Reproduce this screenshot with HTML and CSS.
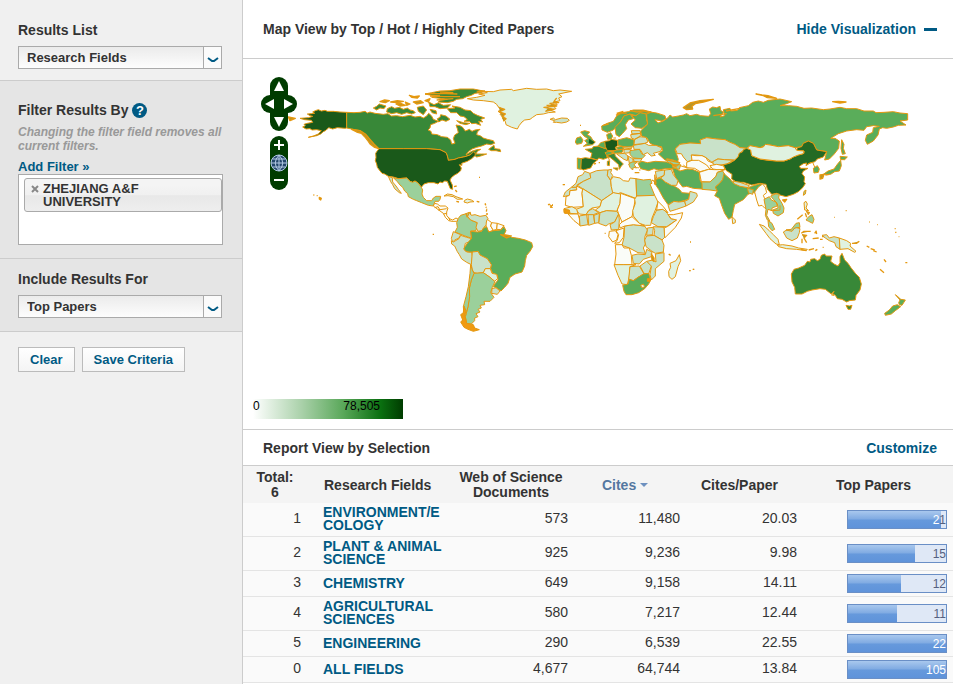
FILE: index.html
```html
<!DOCTYPE html>
<html lang="en">
<head>
<meta charset="utf-8">
<title>Research Fields</title>
<link rel="stylesheet" href="styles.css">
</head>
<body>
<div class="page">
  <aside class="sidebar">
    <section class="block block-list">
      <label class="heading" for="results-list">Results List</label>
      <div class="picker">
        <select id="results-list"><option>Research Fields</option></select>
        <span class="picker-arrow"><svg width="12" height="6" viewBox="0 0 12 6"><path d="M1 1L5 4H7L11 1" /></svg></span>
      </div>
    </section>
    <section class="block block-filter shaded">
      <h2 class="heading">Filter Results By <a class="help" href="#">?</a></h2>
      <p class="hint">Changing the filter field removes all current filters.</p>
      <a class="add" href="#">Add Filter »</a>
      <div class="chips">
        <div class="chip"><button class="chip-x" aria-label="Remove"><svg width="8" height="8" viewBox="0 0 8 8"><path d="M1 1L7 7M7 1L1 7"/></svg></button><span>ZHEJIANG A&amp;F UNIVERSITY</span></div>
      </div>
    </section>
    <section class="block block-include shaded">
      <label class="heading" for="include">Include Results For</label>
      <div class="picker">
        <select id="include"><option>Top Papers</option></select>
        <span class="picker-arrow"><svg width="12" height="6" viewBox="0 0 12 6"><path d="M1 1L5 4H7L11 1" /></svg></span>
      </div>
    </section>
    <div class="block actions">
      <button class="btn">Clear</button>
      <button class="btn">Save Criteria</button>
    </div>
  </aside>

  <main class="main">
    <header class="bar bar-map">
      <h1 class="bar-title">Map View by Top / Hot / Highly Cited Papers</h1>
      <a class="bar-link" href="#">Hide Visualization <span class="dash"></span></a>
    </header>
    <section class="map">
      <svg class="world" viewBox="729 177 2130 990" role="img" aria-label="World map">
        <!-- Alaska and Hawaii -->
        <g transform="translate(750 195)">
          <path class="c7" d="M290 142L270 141 250 139 232 139 225 136 214 138 205 134 196 137 188 141 194 145 184 146 172 147 180 152 188 154 176 158 150 160 164 164 184 166 188 172 172 175 162 178 166 182 158 186 168 192 180 191 186 195 200 194 214 197 205 207 190 213 175 217 200 212 212 207 220 200 228 196 236 188 248 192 262 188 285 190 290 189Z"/>
          <path class="o" d="M115 156L136 160 120 167Z"/><path class="o" d="M190 390h3M200 392h3M208 397l6 3-2 5-4-3z"/>
        </g>
        <!-- North America -->
        <g transform="translate(1080 240)">
          <path class="c5" d="M-40 97L-18 98 0 97 15 94 22 99 30 96 45 100 70 103 84 101 94 108 110 107 128 110 150 106 165 111 180 109 190 114 200 108 206 100 215 108 220 118 235 124 224 130 212 134 210 144 204 150 213 154 215 162 232 164 245 170 262 172 272 180 275 192 285 190 280 176 284 165 295 158 292 146 288 135 300 137 308 142 316 153 328 148 336 154 345 150 360 148 352 156 350 164 362 168 370 174 382 178 400 182 404 190 392 194 380 192 365 198 350 202 336 207 325 215 318 224 335 214 350 209 362 208 352 214 348 222 365 222 380 222 362 228 350 231 342 225 330 225 315 230 295 234 285 238 265 241 262 228 258 218 240 209 200 206 130 206 57 206 45 195 36 188 28 177 22 168 15 162 0 152 -25 147 -40 144Z"/>
          <path class="o" d="M-25 148L-10 156 4 160 14 170 22 180 30 192 44 202 56 206 42 192 30 178 16 162 0 152Z"/>
          <path class="c7" d="M57 206L130 206 200 206 240 209 258 218 262 228 265 241 285 238 295 234 315 230 330 225 340 216 345 217 346 226 335 236 322 244 305 250 306 256 298 254 304 264 302 272 293 280 284 285 275 292 270 300 277 315 278 328 271 326 266 314 262 304 254 303 247 308 240 306 234 312 222 308 205 308 192 312 184 322 175 310 165 303 158 307 150 304 140 294 115 296 100 291 85 289 74 282 66 280 58 270 52 262 50 252 46 242 48 232 47 220 50 215Z"/>
          <path class="c3" d="M100 293L115 296 140 294 150 304 158 307 165 303 175 310 184 322 188 330 186 342 190 352 200 362 215 362 220 354 228 349 242 349 240 358 236 364 225 364 220 378 205 376 185 368 170 362 160 358 145 350 143 341 134 333 128 322 120 315 112 305Z"/>
          <path class="c2" d="M85 289L97 293 98 306 108 318 115 328 124 340 118 338 104 326 98 314 92 305Z"/>
          <!-- Arctic islands -->
          <path class="c5" d="M195 42L215 38 240 33 270 32 300 27 340 27 375 34 362 38 345 40 334 46 320 50 308 56 290 58 280 64 262 68 235 66 240 61 262 58 240 55 215 52 240 46 214 46Z"/>
          <path class="o" d="M195 42L240 40 292 42M210 48L252 50 300 50M240 36L280 38M230 60L280 56M375 33L350 36"/>
          <path class="c5" d="M82 86L95 80 104 85 118 82 130 88 142 84 150 90 160 92 166 98 155 102 140 98 125 103 110 98 95 101 80 96Z"/>
          <path class="c5" d="M40 84L50 79 58 72 78 78 72 86 60 84 50 90Z"/>
          <path class="o" d="M60 65L74 60 88 62 76 68ZM108 72L122 70 136 76 120 78ZM148 46L162 50 178 48 172 54 155 52ZM160 66L182 62 190 68 170 72ZM92 66L112 62 130 64 112 68ZM136 66L150 72 140 76ZM195 62L210 56 205 66Z"/>
          <path class="c5" d="M172 82L190 78 200 90 190 104 175 94ZM206 66L222 74 235 68 250 76 272 74 262 84 240 86 225 80 210 80Z"/>
          <path class="c5" d="M262 86L285 84 276 78 300 82 315 90 332 92 340 100 352 106 374 114 362 118 368 126 356 124 362 136 346 130 335 131 328 124 312 124 322 118 312 110 300 108 290 98 272 98Z"/>
          <path class="c5" d="M242 104L258 108 270 118 258 124 246 120 236 126 232 116 240 112ZM290 122L310 128 330 130 318 134 300 130ZM210 88L228 92 230 102 216 98Z"/>
          <path class="c5" d="M386 208L396 200 402 196 404 206 420 208 422 215 408 212 394 212Z"/>
          <!-- Greenland and Iceland -->
          <path class="c1" d="M322 56L350 52 375 46 356 42 382 38 365 34 400 35 420 30 455 28 460 32 500 25 530 28 560 27 580 32 600 30 635 34 615 38 596 42 606 50 596 54 600 62 584 66 592 74 560 76 582 80 588 86 570 90 586 96 565 98 550 102 530 104 518 112 510 118 494 120 486 126 478 136 472 147 455 142 438 134 436 124 428 116 432 108 420 104 424 98 414 94 428 88 414 80 410 73 400 66 370 62 340 60Z"/>
          <path class="o" d="M416 82L434 88 418 96 436 102 426 110 438 116 430 124M590 54L582 64 596 68 570 70 590 78 552 82 582 88 556 94"/>
          <path class="c2" d="M570 118L580 114 586 119 605 114 622 115 628 121 620 126 605 129 590 127 580 127 584 122Z"/>
          <path class="o" d="M660 136h3M357 292h3M611 314h4M564 373l4 2M572 382l4-2M576 376h3"/>
          <!-- Caribbean -->
          <path class="c1" d="M252 348L262 342 276 344 288 350 308 357 292 358 280 350 264 347Z"/>
          <path class="c1" d="M314 361L322 357 334 360 342 365 330 366 322 369 312 366Z"/>
          <path class="o" d="M289 364l8 2M350 364l8 2M375 370l2 4M378 380l1 3M380 390l-1 5M282 320l8-2M286 330l5 6"/>
        </g>
        <!-- Central and South America -->
        <g transform="translate(1200 570)">
          <path class="c0" d="M100 48L104 40 112 42 120 48 136 48 144 54 140 66 140 76 148 86 158 90 168 84 175 88 170 94 156 94 146 92 136 82 130 70 116 60Z"/>
          <path class="l" d="M104 53L114 50 120 60M114 60L140 56M130 72L140 70M146 82L150 92"/>
          <path class="c3" d="M175 85L182 76 195 72 208 67 202 80 212 90 232 98 228 122 212 123 215 145 195 138 180 132 165 126 172 112 170 98Z"/>
          <path class="c2" d="M208 67L214 76 225 74 240 79 258 76 264 86 259 96 262 105 255 108 245 122 234 124 228 112 232 98 212 90 203 80Z"/>
          <path class="c0" d="M262 88L275 98 272 108 280 121 266 126 258 110 259 96Z"/><path class="c0" d="M275 98L292 100 290 118 280 121 272 108Z"/><path class="c0" d="M292 100L312 107 302 119 290 118Z"/>
          <path class="c2" d="M160 125L182 134 177 144 164 150 158 156 154 145Z"/>
          <path class="c2" d="M154 152L160 156 177 146 182 136 200 142 215 146 210 155 196 160 192 178 200 186 215 186 217 200 214 224 200 217 185 207 178 194 172 185 164 168 155 162Z"/>
          <path class="c4" d="M215 145L212 124 234 126 245 124 250 115 260 110 266 126 280 122 302 120 312 110 318 122 312 134 326 136 335 142 355 145 376 150 395 158 398 170 390 184 380 196 376 212 374 228 366 246 345 252 330 262 324 280 314 292 303 303 286 292 280 290 286 280 294 270 292 255 278 250 272 236 274 224 262 206 240 195 234 184 217 186 207 186 196 183 192 175 202 160Z"/>
          <path class="c2" d="M217 186L234 184 240 195 262 206 274 224 271 236 256 236 250 248 232 250 222 248 217 240 214 224Z"/>
          <path class="c1" d="M250 248L256 236 271 236 276 250 290 253 293 265 284 274 270 262Z"/>
          <path class="c3" d="M222 250L250 248 270 262 285 275 277 292 272 308 282 322 270 334 252 334 254 344 240 346 244 354 234 358 240 366 228 371 234 380 224 384 224 392 214 402 200 400 196 380 204 350 208 320 208 295 214 270Z"/>
          <path class="c2" d="M276 296L288 293 300 303 292 313 275 310Z"/>
          <path class="c3" d="M212 224L217 240 222 250 214 270 208 295 209 320 204 350 196 380 199 400 186 396 192 376 190 350 198 320 205 290 210 250Z"/>
          <path class="f" d="M192 348L198 362 194 378 200 400 220 404 224 414 238 419 220 424 204 418 192 412 182 396 188 390 182 374 190 368Z"/>
          <path class="o" d="M302 134L334 138 320 144ZM98 133h4M198 70l4 12M210 66l2 8M256 42l1 4M260 56v3M258 72h6M446 42l4 2M450 52l5-3M456 45h3"/>
        </g>
        <!-- Russia and Asia -->
        <g transform="translate(2040 255)">
          <path class="c4" d="M-100 87L-90 81 -70 84 -45 92 -42 102 -55 108 -75 104 -66 114 -50 108 -36 98 -30 90 -22 96 -5 93 10 90 20 86 30 92 50 88 62 92 86 94 92 86 88 72 98 66 110 68 120 64 122 76 130 82 120 96 134 92 130 74 150 70 152 78 172 76 178 68 205 62 218 52 235 48 250 52 265 46 300 42 335 50 320 56 300 62 325 62 350 64 372 70 395 69 430 74 450 72 480 67 500 71 530 71 552 78 580 78 588 83 612 82 640 80 660 84 683 86 683 105 660 108 678 120 655 121 640 126 620 130 608 128 598 132 594 150 580 168 562 178 556 166 560 150 578 142 580 128 598 124 580 122 560 125 552 136 530 134 500 138 475 146 452 160 465 160 478 168 476 190 462 208 448 222 434 225 440 200 410 195 400 175 385 168 370 175 365 185 345 188 325 182 295 185 262 178 240 188 210 182 200 190 180 188 165 178 150 172 135 164 110 162 80 158 60 165 62 176 30 174 0 178 -12 188 -15 195 -10 208 -5 223 -8 232 -20 230 -45 225 -65 207 -52 197 -55 185 -75 182 -90 175 -98 160 -115 153 -118 138 -98 117Z"/>
          <path class="o" d="M10 68L30 54 60 47 100 43 70 51 46 56 36 64 38 72 20 74ZM228 27L246 30 264 32 290 40 262 38 250 32ZM458 50L475 49 498 51 480 54ZM138 78L180 70M100 92L140 86"/>
          <path class="c2" d="M-14 192L0 178 30 174 62 176 60 165 80 158 110 162 135 164 150 172 165 178 180 188 200 190 178 205 176 214 164 225 134 224 112 222 96 232 78 218 66 212 48 210 34 210 36 226 22 230 10 216 4 206 -8 206Z"/>
          <path class="c0" d="M20 232L36 226 34 210 48 212 66 212 78 218 84 228 98 234 120 238 112 246 98 244 86 253 60 260 44 250 20 248Z"/><path class="l" d="M36 226L56 226 80 240 88 250M10 240L20 248 -6 240"/>
          <path class="c2" d="M98 230L114 222 134 224 160 226 140 237 120 240 100 238Z"/><path class="c0" d="M90 242L110 238 132 243 134 254 112 254 98 252Z"/>
          <path class="c6" d="M130 240L150 234 165 225 174 216 178 205 188 200 190 194 200 190 212 195 215 212 240 222 262 226 290 228 312 228 330 222 340 216 355 210 372 205 372 198 350 196 352 188 365 185 370 175 385 168 400 175 410 195 440 200 430 216 412 222 405 230 390 234 378 242 380 234 370 236 358 244 362 250 384 250 370 258 366 266 374 276 372 290 376 296 368 308 355 320 340 328 318 335 300 330 290 325 275 328 262 312 258 298 240 295 215 300 190 292 170 292 155 282 156 268 138 256Z"/>
          <path class="c1" d="M202 190L210 182 240 188 250 186 256 178 270 180 295 185 325 182 345 188 350 196 372 198 370 206 355 210 340 216 330 222 312 228 290 228 240 222 215 212 212 195Z"/>
          <path class="c4" d="M400 250L412 242 418 252 415 262 402 264Z"/><path class="l" d="M384 236L398 232 404 246"/>
          <path class="c4" d="M485 164L492 178 490 190 496 206 487 208 483 190ZM480 214L502 216 494 224 482 224ZM482 226L484 242 478 258 464 260 452 268 430 268 444 258 462 252 472 238Z"/><path class="o" d="M420 270L432 268 428 280 420 282ZM436 270L448 268"/>
          <path class="c0" d="M58 262L86 253 104 254 134 254 112 262 108 274 90 291 64 290Z"/>
          <path class="c3" d="M64 291L90 291 108 274 112 262 128 258 134 268 128 284 118 296 106 306 112 318 90 315 66 313Z"/>
          <path class="c4" d="M-24 246L-14 250 0 258 22 252 40 254 58 262 60 285 66 296 66 312 40 310 20 304 8 306 -6 288 -14 276Z"/>
          <path class="c4" d="M112 318L106 306 118 296 128 284 132 266 150 282 158 292 180 303 205 308 215 304 240 296 248 300 236 312 228 325 218 322 204 328 190 344 164 358 160 376 156 396 146 403 134 385 124 358 118 340 104 332Z"/>
          <path class="c2" d="M158 288L180 292 208 302 204 308 180 304 162 296Z"/><path class="c3" d="M202 310L220 314 218 328 206 324Z"/>
        </g>
        <!-- Europe -->
        <g transform="translate(1650 240)">
          <path class="c4" d="M156 150L155 138 172 130 190 124 200 108 216 98 235 95 250 90 280 90 304 96 290 102 270 98 258 107 240 102 222 108 212 125 200 140 190 150 172 157Z"/>
          <path class="c4" d="M195 142L212 125 222 108 240 102 250 116 235 120 226 134 230 146 218 160 208 170 198 164Z"/>
          <path class="c4" d="M244 106L258 107 270 98 288 102 290 120 293 132 276 145 256 143 243 132 256 120Z"/>
          <path class="o" d="M198 106L212 98 230 100M240 92L262 96 280 92 300 98M160 136L176 132M200 100L220 94"/>
          <path class="c4" d="M170 164L182 158 188 168 184 177 173 178ZM190 174h8"/>
          <path class="c4" d="M92 156L104 152 119 156 112 164 122 170 128 180 136 186 128 194 100 199 112 190 104 182 114 176 102 168Z"/><path class="c7 n" d="M118 176L126 182 134 187 126 193 116 190Z"/>
          <path class="c4" d="M76 186L80 174 92 170 99 180 95 190 80 193Z"/>
          <path class="c5" d="M106 208L126 206 130 200 146 198 162 204 180 210 172 218 176 232 160 238 146 234 142 240 122 234 126 220Z"/>
          <path class="c6" d="M92 236L106 233 124 236 142 240 130 250 122 264 100 270 92 266Z"/><path class="c4" d="M82 234L94 236 92 268 82 266Z"/>
          <path class="c4" d="M144 198L152 188 166 184 166 206Z"/>
          <path class="c7" d="M164 184L178 182 184 178 202 181 204 196 196 202 200 212 172 212 166 200Z"/>
          <path class="c4" d="M203 180L230 173 252 180 252 196 240 202 222 200 204 196Z"/>
          <path class="c4" d="M165 218L176 214 190 216 182 224 170 226ZM184 216L200 210 220 208 216 218 196 220ZM198 202L216 199 226 206 204 209Z"/>
          <path class="c5" d="M168 228L184 222 194 220 196 228 208 240 220 252 214 258 208 268 206 254 190 240 180 232Z"/><path class="c5" d="M190 264L204 264 202 271ZM172 244L179 242 178 257 172 256ZM175 232L178 240"/>
          <path class="c2" d="M222 208L244 204 240 218 222 220ZM218 202L248 200 240 208 222 208Z"/>
          <path class="c3" d="M240 212L268 208 276 222 286 226 276 236 250 234 240 224Z"/>
          <path class="c2" d="M200 222L224 220 234 228 232 242 222 238ZM234 228L248 236 250 246 238 250ZM250 236L276 236 270 246 252 244Z"/>
          <path class="c3" d="M236 252L246 246 262 246 252 254 260 264 250 262 248 270 240 262Z"/><path class="o" d="M254 278h14M262 262l4 2M268 270h3M320 278l8-2M132 252l6-2M146 248h4"/>
          <path class="c2" d="M250 196L285 190 296 196 318 196 336 204 332 214 310 220 316 226 304 228 292 218 280 224 270 208 252 208Z"/>
          <path class="c2" d="M254 178L268 170 288 172 294 186 284 190 252 194ZM244 152L270 152 272 160 246 162ZM242 164L272 160 270 170 254 178 244 174Z"/>
          <path class="c4" d="M264 250L276 244 292 248 316 244 350 246 366 252 370 266 346 266 326 270 312 266 296 272 272 266Z"/>
          <path class="c3" d="M350 236L370 240 390 248 382 258 366 252 352 246ZM370 254L392 254 388 268 372 264Z"/><path class="o" d="M352 240L388 248M360 248L380 262"/>
        </g>
        <!-- Africa and the Middle East -->
        <g transform="translate(1650 480)">
          <path class="c2" d="M104 34L120 40 122 54 100 64 82 74 80 82 64 82 78 70 84 50 98 44Z"/><path class="c2" d="M64 82L80 82 80 90 60 92 58 106 40 110 46 96Z"/>
          <path class="c0" d="M60 92L80 90 80 78 98 88 96 100 100 140 66 142 46 136 48 110 58 106Z"/>
          <path class="c2" d="M120 40L140 32 162 30 174 30 172 46 182 62 184 80 190 98 155 122 98 86 82 76 100 64 122 54Z"/>
          <path class="c2" d="M174 30L185 28 182 38 188 46 182 60 172 46Z"/>
          <path class="c1" d="M182 60L190 50 210 54 220 62 236 64 240 54 258 56 260 116 212 98 202 102 188 98 184 80Z"/>
          <path class="c3" d="M258 56L280 60 302 58 306 70 300 72 314 106 260 108Z"/>
          <path class="c1" d="M98 86L155 122 150 140 126 144 116 152 108 164 88 162 78 148 100 140 96 100Z"/>
          <path class="c1" d="M155 122L190 98 212 102 210 130 200 154 170 152 150 158 136 150 150 140Z"/>
          <path class="c0" d="M212 100L256 116 250 150 246 170 216 186 206 162 202 150 210 130Z"/>
          <path class="c1" d="M260 108L314 106 324 126 316 150 306 174 302 196 286 196 268 190 250 168 248 152 256 130 254 118Z"/>
          <path class="c2" d="M320 150L340 148 352 160 362 176 380 180 350 200 324 200 304 188 310 170Z"/><path class="c0" d="M324 124L340 140 354 158 338 148 320 150Z"/>
          <path class="c0" d="M354 164L370 164 398 158 394 174 376 202 344 234 342 204 352 200 380 180 364 176Z"/>
          <path class="c2" d="M310 200L342 202 344 232 336 240 312 226 314 212Z"/><path class="c2" d="M292 204L310 202 308 224 290 226Z"/>
          <path class="c2" d="M224 198L250 194 284 198 292 210 284 232 286 252 280 264 286 280 264 278 238 264 216 256 222 232Z"/>
          <path class="c0" d="M208 194L216 186 246 170 268 190 284 198 250 194 224 198 210 204Z"/>
          <path class="c2" d="M150 158L170 152 200 154 206 162 194 186 176 192 168 198 146 190Z"/><path class="c2" d="M180 194L194 186 206 162 208 180 206 208 184 210Z"/>
          <path class="c1" d="M42 146L66 140 80 148 84 162 60 160 42 158Z"/><path class="f" d="M42 148L58 150 60 160 44 160Z"/>
          <path class="c0" d="M54 162L84 162 88 176 90 196 72 182Z"/><path class="c2" d="M88 168L110 164 114 194 90 198Z"/><path class="c2" d="M114 164L130 162 134 190 116 196Z"/><path class="c2" d="M132 166L148 160 146 188 134 190Z"/><path class="c2" d="M108 164L116 152 128 146 146 158 130 164Z"/>
          <path class="c0" d="M178 214L196 212 204 224 200 240 188 246 176 230Z"/><path class="c0" d="M198 212L222 204 220 232 208 248 194 250 202 240 206 224Z"/>
          <path class="c0" d="M196 254L216 254 222 264 238 264 244 286 246 314 194 314 198 282Z"/>
          <path class="c2" d="M246 286L264 282 286 284 290 268 306 276 304 290 280 298 268 312 250 310Z"/>
          <path class="c2" d="M290 228L312 226 336 240 342 256 340 276 316 280 306 274 288 260 284 240Z"/>
          <path class="c2" d="M342 278L342 304 316 326 316 348 304 360 300 344 304 320 290 304 308 300 318 306 316 282Z"/><path class="o" d="M304 282L312 294 312 304 306 300Z"/>
          <path class="c1" d="M192 314L220 314 258 314 240 320 238 350 232 374 216 372 204 346Z"/><path class="c2" d="M240 320L268 318 282 342 264 352 250 362 236 358Z"/><path class="c2" d="M270 318L290 304 304 318 296 342 282 340Z"/>
          <path class="c4" d="M218 376L234 372 238 358 250 362 264 352 280 342 296 340 302 360 296 372 284 386 266 398 246 404 228 404 222 394Z"/><path class="c1" d="M272 376L280 372 284 380 276 384Z"/><path class="f" d="M292 356h8v8h-8z"/>
          <path class="c1" d="M388 284L392 302 384 320 376 350 366 358 357 350 356 334 362 322 360 310 378 302Z"/><path class="o" d="M356 282l6 4M418 332h3M430 328h3M420 246h2M164 220h3M38 74h4M0 135l6 3M4 142h4"/>
          <path class="c4" d="M318 58L332 54 346 66 376 80 388 88 396 98 420 100 416 118 386 126 372 124 354 134 340 114 326 88 314 70Z"/>
          <path class="c2" d="M354 136L372 124 386 126 404 124 408 138 380 148 360 154Z"/><path class="c2" d="M404 124L416 118 420 94 440 100 442 108 430 126 408 138Z"/>
          <path class="c2" d="M344 30L364 28 370 44 384 62 380 76 364 76 346 66 332 54 342 46Z"/><path class="c2" d="M316 34L344 30 342 46 320 56Z"/><path class="o" d="M314 44L318 70 312 72M306 60L316 66"/>
        </g>
        <!-- South-east Asia and Oceania -->
        <g transform="translate(2040 540)">
          <path class="c1" d="M156 110L166 120 166 128 158 131Z"/>
          <path class="c0" d="M224 36L236 20 248 12 256 22 260 38 250 46 254 56 256 72 262 88 254 84 246 76 236 78 230 60Z"/>
          <path class="c3" d="M252 58L268 50 274 60 288 66 292 78 276 84 276 92 264 88 260 106 270 124 262 120 256 106 258 88Z"/>
          <path class="c3" d="M272 48L286 42 298 42 296 54 306 70 312 84 310 98 294 108 280 100 278 90 294 84 292 70 280 58Z"/><path class="l" d="M278 92L300 90 300 76"/>
          <path class="c3" d="M264 122L276 130 284 148 276 152 266 140Z"/>
          <path class="c1" d="M238 133L252 138 268 152 280 164 294 178 298 194 288 192 270 176 258 160 246 144Z"/>
          <path class="c1" d="M292 196L308 194 336 198 356 204 382 208 378 212 350 208 320 206 296 200Z"/><path class="o" d="M386 210L402 206M362 208L380 212"/>
          <path class="c2" d="M310 156L320 150 336 150 348 142 360 146 358 158 352 174 336 182 320 174Z"/><path class="c3" d="M318 150L334 148 348 130 358 128 360 142 344 144 336 154Z"/>
          <path class="o" d="M364 160L372 154 392 154M366 164L380 166 372 174 380 188M366 176L366 190M408 152l2 10M398 176L416 174M420 178h8M426 170h16M404 160l4-6M428 202h3M412 208l-6 4"/>
          <path class="c2" d="M426 166L440 164 448 174 462 170 478 174 480 208 468 200 464 188 448 182 436 174Z"/><path class="c1" d="M478 174L500 182 512 190 510 198 528 214 524 217 504 206 480 208Z"/><path class="o" d="M516 190L530 190 538 184M560 198l8 4M572 206l12 4M580 212l10 4M612 238l6 8M600 268l12 10M676 248h6M30 186h2M568 126h2M592 134h2M462 112h2M497 92h3M644 146h3M646 156l3 2M656 170h2M28 272h4M38 268h4"/>
          <path class="c1" d="M372 68L378 64 382 72 378 84 386 92 374 90Z"/><path class="c3" d="M386 110L396 104 402 118 398 130 386 124 378 120Z"/><path class="o" d="M352 118L368 104M378 94L388 98 384 104M376 100L380 112"/>
          <path class="c3" d="M372 34L378 30 376 42 370 46Z"/><path class="o" d="M308 60L320 58 314 66Z"/>
          <path class="c5" d="M334 282L342 268 356 264 374 256 382 244 390 246 392 238 404 236 412 242 420 238 424 226 434 222 438 228 456 228 452 244 462 252 474 258 480 248 480 230 486 220 494 240 504 250 512 262 526 280 538 292 544 312 540 330 528 346 526 360 508 362 500 366 486 358 472 356 466 346 458 342 462 334 454 342 446 336 436 328 420 326 396 330 382 334 366 342 346 342 344 322 336 306Z"/>
          <path class="c5" d="M498 376L508 378 516 376 512 388 504 388Z"/><path class="o" d="M454 344l8 2"/>
          <path class="c4" d="M646 344L656 352 662 358 676 360 666 376 658 374 656 368 660 360Z"/><path class="c4" d="M652 374L662 380 646 392 634 402 616 406 614 400 628 390 638 378Z"/>
        </g>
      </svg>
      <div class="pan">
        <button class="ctl up" aria-label="Pan up"><svg width="12" height="12" viewBox="0 0 12 12"><path d="M6 1L11 11H1z"/></svg></button>
        <button class="ctl left" aria-label="Pan left"><svg width="12" height="12" viewBox="0 0 12 12"><path d="M1 6L10 1V11z"/></svg></button>
        <button class="ctl right" aria-label="Pan right"><svg width="12" height="12" viewBox="0 0 12 12"><path d="M11 6L2 1V11z"/></svg></button>
        <button class="ctl down" aria-label="Pan down"><svg width="12" height="12" viewBox="0 0 12 12"><path d="M6 11L11 1H1z"/></svg></button>
      </div>
      <div class="zoom">
        <button class="ctl up" aria-label="Zoom in"><svg width="12" height="12" viewBox="0 0 12 12"><path d="M5 1h2v4h4v2H7v4H5V7H1V5h4z"/></svg></button>
        <button class="ctl" aria-label="Whole world"><svg class="globe" width="18" height="18" viewBox="0 0 18 18"><circle cx="9" cy="9" r="8"/><path d="M9 1V17M1 9H17M2.500 5H15.500M2.500 13H15.500M9 1Q1.500 9 9 17M9 1Q16.500 9 9 17"/></svg></button>
        <button class="ctl down" aria-label="Zoom out"><svg width="12" height="12" viewBox="0 0 12 12"><path d="M1 4h10v2H1z"/></svg></button>
      </div>
      <div class="legend"><span>0</span><span>78,505</span></div>
    </section>
    <header class="bar bar-report">
      <h2 class="bar-title">Report View by Selection</h2>
      <a class="bar-link" href="#">Customize</a>
    </header>
    <table class="report">
      <colgroup><col class="w-rank"><col class="w-name"><col class="w-docs"><col class="w-cites"><col class="w-rate"><col></colgroup>
      <thead>
        <tr><th class="total"><span>Total:<br>6</span></th><th class="field">Research Fields</th><th class="docs">Web of Science Documents</th><th class="sorted">Cites <span class="caret"></span></th><th class="shift">Cites/Paper</th><th class="shift">Top Papers</th></tr>
      </thead>
      <tbody>
        <tr><td>1</td><td class="name"><a href="#">ENVIRONMENT/E<br>COLOGY</a></td><td>573</td><td>11,480</td><td>20.03</td><td class="papers"><div class="meter"><div class="fill" style="width:95%"></div><span class="count"><b>2</b>1</span></div></td></tr>
        <tr><td>2</td><td class="name"><a href="#">PLANT &amp; ANIMAL SCIENCE</a></td><td>925</td><td>9,236</td><td>9.98</td><td class="papers"><div class="meter"><div class="fill" style="width:68%"></div><span class="count">15</span></div></td></tr>
        <tr><td>3</td><td class="name"><a href="#">CHEMISTRY</a></td><td>649</td><td>9,158</td><td>14.11</td><td class="papers"><div class="meter"><div class="fill" style="width:54%"></div><span class="count">12</span></div></td></tr>
        <tr><td>4</td><td class="name"><a href="#">AGRICULTURAL SCIENCES</a></td><td>580</td><td>7,217</td><td>12.44</td><td class="papers"><div class="meter"><div class="fill" style="width:50%"></div><span class="count">11</span></div></td></tr>
        <tr><td>5</td><td class="name"><a href="#">ENGINEERING</a></td><td>290</td><td>6,539</td><td>22.55</td><td class="papers"><div class="meter"><div class="fill" style="width:100%"></div><span class="count"><b>22</b></span></div></td></tr>
        <tr><td>0</td><td class="name"><a href="#">ALL FIELDS</a></td><td>4,677</td><td>64,744</td><td>13.84</td><td class="papers"><div class="meter"><div class="fill" style="width:100%"></div><span class="count"><b>105</b></span></div></td></tr>
      </tbody>
    </table>
  </main>
</div>
</body>
</html>
```
FILE: styles.css
```css
* { box-sizing: border-box; }
body { margin: 0; background: #fff; color: #333; font: 14px/16px "Liberation Sans", Arial, sans-serif; }
a { color: #005a84; text-decoration: none; font-weight: bold; }
h1, h2, p { margin: 0; font-size: 14px; }
button, select { font: bold 13px/16px "Liberation Sans", Arial, sans-serif; color: #333; margin: 0; }
.page { display: flex; min-height: 100vh; }

/* Sidebar */
.sidebar { flex: 0 0 243px; background: #f0f0f0; border-right: 1px solid #ccc; }
.block { padding: 0 20px 0 18px; border-bottom: 1px solid #ccc; }
.shaded { background: #e5e5e5; }
.block-list { padding-top: 22px; padding-bottom: 11px; }
.block-filter { padding-top: 20px; padding-bottom: 13px; padding-right: 19px; }
.block-include { padding-top: 12px; padding-bottom: 13px; }
.heading { display: block; font-size: 14px; font-weight: bold; line-height: 16px; margin-bottom: 8px; }
.block-filter .heading { display: flex; align-items: center; gap: 4px; line-height: 18px; margin-bottom: 6px; }
.help { display: block; width: 15px; height: 15px; border-radius: 50%; background: #005a84; color: #fff; font-size: 13px; line-height: 15px; text-align: center; }
.picker { position: relative; }
.picker select { display: block; width: 100%; height: 23px; padding: 1px 24px 0 8px; border: 1px solid #aaa; border-radius: 0; background: linear-gradient(#ebebeb, #fdfdfd); appearance: none; }
.picker-arrow { position: absolute; top: 1px; right: 1px; bottom: 1px; width: 18px; display: flex; align-items: center; justify-content: center; padding-top: 4px; border-left: 1px solid #aaa; background: #fbfbfb; pointer-events: none; }
.picker-arrow path { fill: none; stroke: #005a84; stroke-width: 2; }
.hint { color: #999; font-size: 12px; line-height: 14px; font-style: italic; font-weight: bold; }
.add { display: block; margin-top: 6px; font-size: 13px; line-height: 15px; }
.chips { min-height: 71px; padding: 3px 0 0 5px; background: #fff; border: 1px solid #aaa; }
.chip { display: flex; height: 34px; padding: 3px 60px 0 6px; border: 1px solid #aaa; border-radius: 3px; background: linear-gradient(#f4f4f4 20%, #f0f0f0 50%, #e8e8e8 52%, #eee); font-size: 13px; line-height: 13px; font-weight: bold; }
.chip-x { display: block; flex: none; width: 12px; height: 13px; padding: 0; border: 0; background: none; text-align: left; line-height: 13px; }
.chip-x path { stroke: #888; stroke-width: 2; }
.actions { display: flex; gap: 7px; padding-top: 15px; border: 0; }
.btn { height: 25px; padding: 1px 11px 0; border: 1px solid #bbb; background: linear-gradient(#fff, #f4f4f4); color: #005a84; }

/* Main column */
.main { flex: 1; min-width: 0; }
.bar { display: flex; align-items: center; justify-content: space-between; padding: 0 16px 0 20px; border-bottom: 1px solid #ccc; }
.bar-map { height: 59px; }
.bar-report { height: 37px; border-top: 1px solid #ccc; }
.bar-link { display: flex; align-items: center; gap: 8px; }
.dash { width: 13px; height: 3px; background: #005a84; }

/* Map */
.map { position: relative; padding-bottom: 10px; }
.world { display: block; width: 100%; height: auto; }
.world path { stroke: #e5980f; stroke-width: 3; stroke-linejoin: round; }
.world .c0 { fill: #fafcf8; }
.world .c1 { fill: #e0f2e0; }
.world .c2 { fill: #c9e2c9; }
.world .c3 { fill: #9bd09b; }
.world .c4 { fill: #5aad5a; }
.world .c5 { fill: #388838; }
.world .c6 { fill: #246a24; }
.world .c7 { fill: #1a591a; }
.world .f { fill: #f09a10; }
.world .o { fill: #b89628; stroke-width: 4; }
.world .l { fill: none; }
.world .n { stroke: none; }
.pan { position: absolute; top: 18px; left: 18px; display: grid; grid-template: repeat(3, 18px) / repeat(4, 9px); }
.pan .up, .pan .down { grid-column: 2 / 4; }
.pan .left { grid-column: 1 / 3; grid-row: 2; border-radius: 9px 0 0 9px; }
.pan .right { grid-column: 3 / 5; grid-row: 2; border-radius: 0 9px 9px 0; }
.zoom { position: absolute; top: 77px; left: 27px; }
.ctl { display: flex; align-items: center; justify-content: center; width: 18px; height: 18px; padding: 0; border: 0; background: #003c00; }
.ctl path { fill: #fff; }
.up { border-radius: 9px 9px 0 0; }
.down { border-radius: 0 0 9px 9px; }
.globe circle { fill: #24476b; stroke: #b4cbe6; }
.ctl .globe path { fill: none; stroke: #b4cbe6; }
.legend { display: flex; justify-content: space-between; width: 150px; height: 20px; margin: 10px 0 0 10px; padding-right: 23px; background: linear-gradient(90deg, #fff, #a8d0a8 33%, #5aa85a 60%, #0a7010 85%, #003c00); color: #000; font-size: 12px; line-height: 15px; }

/* Report */
.report { width: 100%; table-layout: fixed; border-collapse: collapse; }
.w-rank { width: 70px; }
.w-name { width: 136px; }
.w-docs { width: 124px; }
.w-cites { width: 112px; }
.w-rate { width: 117px; }
.report th { height: 37px; padding: 1px 0 0; background: #f4f4f4; line-height: 15px; }
.report .total { padding-right: 6px; }
.report .total span { display: inline-block; }
.report .docs { padding-right: 10px; white-space: normal; }
.report .docs { padding-right: 0; }
.report .field { padding-left: 11px; text-align: left; }
.report .shift { padding-right: 8px; }
.report .sorted { padding-right: 8px; color: #5577a0; }
.caret { display: inline-block; vertical-align: 3px; border: 4px solid transparent; border-top-color: #6d90bf; border-bottom: 0; }
.report td { height: 26px; padding: 2px 5px 5px 0; border-bottom: 1px solid #e4e4e4; background: #fafafa; text-align: right; }
.report td:first-child { padding-right: 12px; }
.report .name { padding: 3px 6px 4px 10px; text-align: left; line-height: 13px; }
.report .papers { padding: 3px 6px 3px 0; }
.meter { position: relative; width: 100px; height: 19px; margin-left: auto; border: 1px solid #6a8fc6; background: #dfe8f6; }
.fill { height: 100%; background: linear-gradient(#a9c8ee, #7faae2 48%, #6699dc 52%, #5f93da); }
.count { position: absolute; top: 1px; right: 0; color: #556080; font-size: 12px; }
.count b { color: #fff; font-weight: normal; }
```
